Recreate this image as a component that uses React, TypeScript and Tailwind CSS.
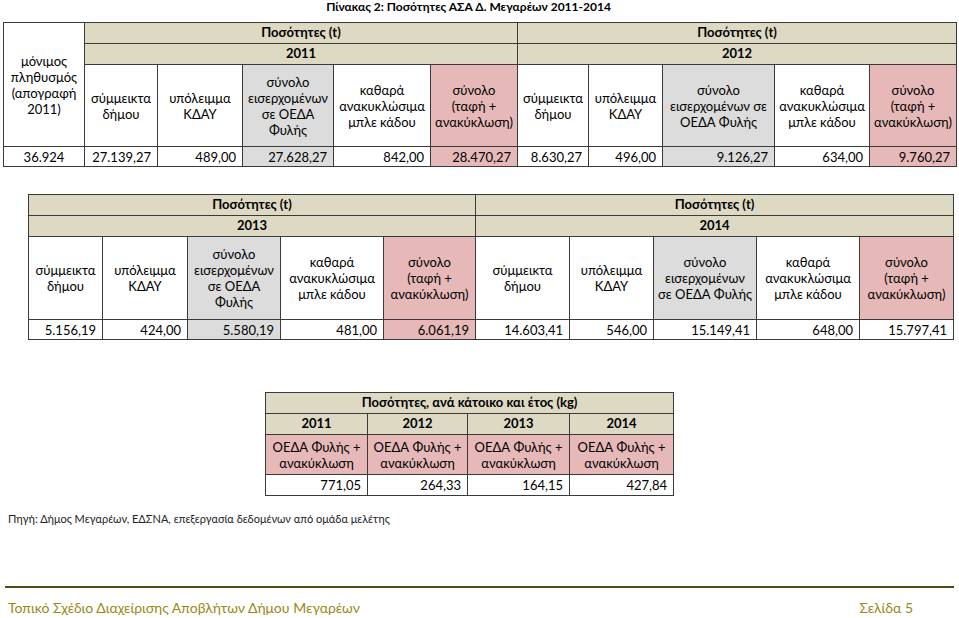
import React from "react";

const F = { fontFamily: '"Lato", "Open Sans", "Noto Sans", sans-serif' };

const tan = "bg-[#ddd9c3]";
const grey = "bg-[#dcdcdc]";
const pink = "bg-[#e6b9b8]";
const bd = "border border-[#3a3a3a]";

function H({ lines, bg = "bg-white", rowSpan }: { lines: string[]; bg?: string; rowSpan?: number }) {
  return (
    <td rowSpan={rowSpan} className={`${bd} ${bg} text-center align-middle p-0 leading-[16px]`}>
      {lines.map((l, i) => (
        <div key={i}>{l}</div>
      ))}
    </td>
  );
}

function N({ v, bg = "bg-white", center }: { v: string; bg?: string; center?: boolean }) {
  return (
    <td className={`${bd} ${bg} ${center ? "text-center" : "text-right pr-[6px]"} align-middle p-0 leading-[16px]`}>
      {v}
    </td>
  );
}

const S = ["σύμμεικτα", "δήμου"];
const K = ["υπόλειμμα", "ΚΔΑΥ"];
const B = ["καθαρά", "ανακυκλώσιμα", "μπλε κάδου"];
const T = ["σύνολο", "(ταφή +", "ανακύκλωση)"];

export default function App() {
  const w1 = [81, 73, 85, 91, 97, 87, 71, 74, 112, 95, 87];
  const w2 = [74, 85, 93, 103, 92, 94, 84, 103, 103, 94];
  const w3 = [102, 100, 102, 104];
  return (
    <div className="w-[959px] h-[618px] bg-white text-[13px] text-black relative overflow-hidden" style={F}>
      <div className="text-center font-bold text-[12px] leading-[14px] pr-[22px] pt-0">Πίνακας 2: Ποσότητες ΑΣΑ Δ. Μεγαρέων 2011-2014</div>

      {/* Table 1 */}
      <table className="table-fixed border-collapse ml-[3px] mt-[8px]" style={{ width: 953 }}>
        <colgroup>
          {w1.map((w, i) => (
            <col key={i} style={{ width: w }} />
          ))}
        </colgroup>
        <tbody>
          <tr className="h-[21px]">
            <H rowSpan={3} lines={["μόνιμος", "πληθυσμός", "(απογραφή", "2011)"]} />
            <td colSpan={5} className={`${bd} ${tan} text-center font-bold p-0`}>Ποσότητες (t)</td>
            <td colSpan={5} className={`${bd} ${tan} text-center font-bold p-0`}>Ποσότητες (t)</td>
          </tr>
          <tr className="h-[21px]">
            <td colSpan={5} className={`${bd} ${tan} text-center font-bold p-0`}>2011</td>
            <td colSpan={5} className={`${bd} ${tan} text-center font-bold p-0`}>2012</td>
          </tr>
          <tr className="h-[82px]">
            <H lines={S} />
            <H lines={K} />
            <H lines={["σύνολο", "εισερχομένων", "σε ΟΕΔΑ", "Φυλής"]} bg={grey} />
            <H lines={B} />
            <H lines={T} bg={pink} />
            <H lines={S} />
            <H lines={K} />
            <H lines={["σύνολο", "εισερχομένων σε", "ΟΕΔΑ Φυλής"]} bg={grey} />
            <H lines={B} />
            <H lines={T} bg={pink} />
          </tr>
          <tr className="h-[20px]">
            <N v="36.924" center />
            <N v="27.139,27" />
            <N v="489,00" />
            <N v="27.628,27" bg={grey} />
            <N v="842,00" />
            <N v="28.470,27" bg={pink} />
            <N v="8.630,27" />
            <N v="496,00" />
            <N v="9.126,27" bg={grey} />
            <N v="634,00" />
            <N v="9.760,27" bg={pink} />
          </tr>
        </tbody>
      </table>

      {/* Table 2 */}
      <table className="table-fixed border-collapse ml-[28px] mt-[27px]" style={{ width: 925 }}>
        <colgroup>
          {w2.map((w, i) => (
            <col key={i} style={{ width: w }} />
          ))}
        </colgroup>
        <tbody>
          <tr className="h-[21px]">
            <td colSpan={5} className={`${bd} ${tan} text-center font-bold p-0`}>Ποσότητες (t)</td>
            <td colSpan={5} className={`${bd} ${tan} text-center font-bold p-0`}>Ποσότητες (t)</td>
          </tr>
          <tr className="h-[21px]">
            <td colSpan={5} className={`${bd} ${tan} text-center font-bold p-0`}>2013</td>
            <td colSpan={5} className={`${bd} ${tan} text-center font-bold p-0`}>2014</td>
          </tr>
          <tr className="h-[83px]">
            <H lines={S} />
            <H lines={K} />
            <H lines={["σύνολο", "εισερχομένων", "σε ΟΕΔΑ", "Φυλής"]} bg={grey} />
            <H lines={B} />
            <H lines={T} bg={pink} />
            <H lines={S} />
            <H lines={K} />
            <H lines={["σύνολο", "εισερχομένων", "σε ΟΕΔΑ Φυλής"]} bg={grey} />
            <H lines={B} />
            <H lines={T} bg={pink} />
          </tr>
          <tr className="h-[20px]">
            <N v="5.156,19" />
            <N v="424,00" />
            <N v="5.580,19" bg={grey} />
            <N v="481,00" />
            <N v="6.061,19" bg={pink} />
            <N v="14.603,41" />
            <N v="546,00" />
            <N v="15.149,41" />
            <N v="648,00" />
            <N v="15.797,41" />
          </tr>
        </tbody>
      </table>

      {/* Table 3 */}
      <table className="table-fixed border-collapse ml-[265px] mt-[52px]" style={{ width: 408 }}>
        <colgroup>
          {w3.map((w, i) => (
            <col key={i} style={{ width: w }} />
          ))}
        </colgroup>
        <tbody>
          <tr className="h-[21px]">
            <td colSpan={4} className={`${bd} ${tan} text-center font-bold p-0`}>Ποσότητες, ανά κάτοικο και έτος (kg)</td>
          </tr>
          <tr className="h-[21px]">
            {["2011", "2012", "2013", "2014"].map((y) => (
              <td key={y} className={`${bd} ${tan} text-center font-bold p-0`}>{y}</td>
            ))}
          </tr>
          <tr className="h-[40px]">
            {[0, 1, 2, 3].map((i) => (
              <H key={i} lines={["ΟΕΔΑ Φυλής +", "ανακύκλωση"]} bg={pink} />
            ))}
          </tr>
          <tr className="h-[21px]">
            <N v="771,05" />
            <N v="264,33" />
            <N v="164,15" />
            <N v="427,84" />
          </tr>
        </tbody>
      </table>

      <div className="ml-[8px] mt-[16px] text-[11px] leading-[14px] text-[#222]">
        Πηγή: Δήμος Μεγαρέων, ΕΔΣΝΑ, επεξεργασία δεδομένων από ομάδα μελέτης
      </div>

      <div className="absolute left-0 right-0 top-[586px] px-[5px]">
        <div className="h-[2px] bg-[#4f4a17]" />
        <div className="flex justify-between pl-[3px] pr-[41px] mt-[12px] text-[14px] leading-[16px] text-[#9a8814]">
          <span>Τοπικό Σχέδιο Διαχείρισης Αποβλήτων Δήμου Μεγαρέων</span>
          <span>Σελίδα 5</span>
        </div>
      </div>
    </div>
  );
}
